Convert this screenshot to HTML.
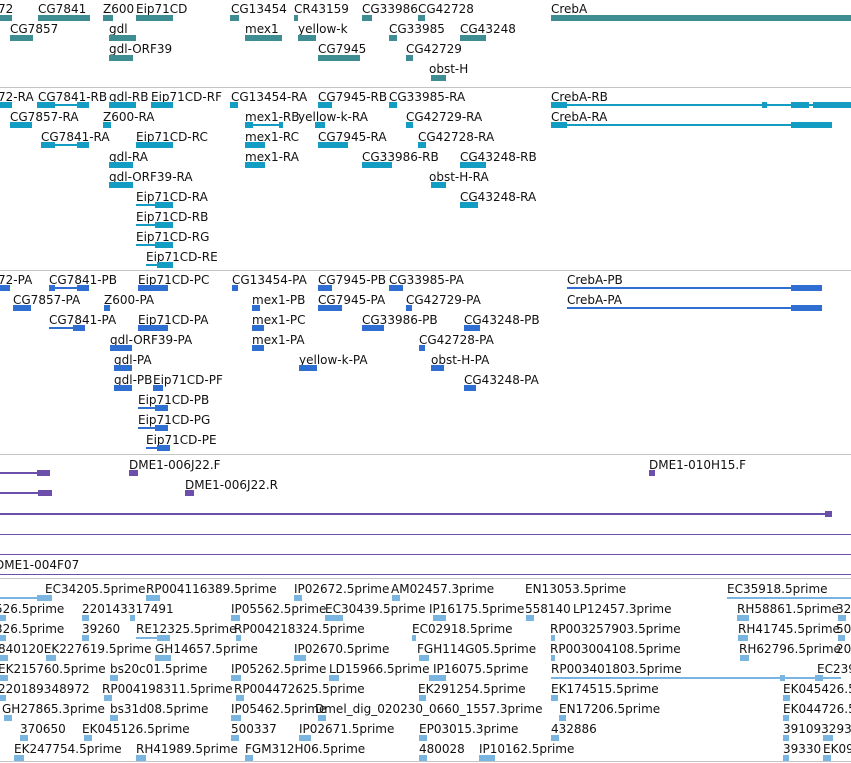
<!DOCTYPE html><html><head><meta charset="utf-8"><style>
body{margin:0;width:851px;height:763px;overflow:hidden;background:#fff;position:relative;font-family:"DejaVu Sans","Liberation Sans",sans-serif}
.t{position:absolute;font-size:12px;line-height:14px;white-space:nowrap;color:#111;margin-top:1px}
i{position:absolute;height:6px;display:block}
.a{background:#3e8d92}.b{background:#139dc2}.c{background:#2f6fd2}.d{background:#6c4faa}.e{background:#79b5e0}
.l{height:2px!important}
.s{position:absolute;left:0;width:851px;height:1px;background:#c4c4c4}
.p{position:absolute;left:0;width:851px;height:1px;background:#6c4faa}
</style></head><body>
<div class="s" style="top:87px"></div><div class="s" style="top:270px"></div><div class="s" style="top:454px"></div><div class="s" style="top:578px"></div><div class="s" style="top:761px"></div>

<div class="t" style="left:-2px;top:1px">72</div><i class="a" style="left:0;top:15px;width:12px"></i>
<div class="t" style="left:38px;top:1px">CG7841</div><i class="a" style="left:38px;top:15px;width:52px"></i>
<div class="t" style="left:103px;top:1px">Z600</div><i class="a" style="left:103px;top:15px;width:10px"></i>
<div class="t" style="left:136px;top:1px">Eip71CD</div><i class="a" style="left:136px;top:15px;width:37px"></i>
<div class="t" style="left:231px;top:1px">CG13454</div><i class="a" style="left:230px;top:15px;width:9px"></i>
<div class="t" style="left:294px;top:1px">CR43159</div><i class="a" style="left:294px;top:15px;width:4px"></i>
<div class="t" style="left:362px;top:1px">CG33986</div><i class="a" style="left:362px;top:15px;width:10px"></i>
<div class="t" style="left:418px;top:1px">CG42728</div><i class="a" style="left:418px;top:15px;width:7px"></i>
<div class="t" style="left:551px;top:1px">CrebA</div><i class="a" style="left:551px;top:15px;width:300px"></i>
<div class="t" style="left:10px;top:21px">CG7857</div><i class="a" style="left:10px;top:35px;width:23px"></i>
<div class="t" style="left:109px;top:21px">gdl</div><i class="a" style="left:109px;top:35px;width:27px"></i>
<div class="t" style="left:245px;top:21px">mex1</div><i class="a" style="left:245px;top:35px;width:37px"></i>
<div class="t" style="left:298px;top:21px">yellow-k</div><i class="a" style="left:298px;top:35px;width:18px"></i>
<div class="t" style="left:389px;top:21px">CG33985</div><i class="a" style="left:389px;top:35px;width:8px"></i>
<div class="t" style="left:460px;top:21px">CG43248</div><i class="a" style="left:460px;top:35px;width:26px"></i>
<div class="t" style="left:109px;top:41px">gdl-ORF39</div><i class="a" style="left:109px;top:55px;width:24px"></i>
<div class="t" style="left:318px;top:41px">CG7945</div><i class="a" style="left:318px;top:55px;width:42px"></i>
<div class="t" style="left:406px;top:41px">CG42729</div><i class="a" style="left:406px;top:55px;width:7px"></i>
<div class="t" style="left:429px;top:61px">obst-H</div><i class="a" style="left:431px;top:75px;width:15px"></i>

<div class="t" style="left:-2px;top:89px">72-RA</div><i class="b" style="left:0;top:102px;width:12px"></i>
<div class="t" style="left:38px;top:89px">CG7841-RB</div><i class="b" style="left:37px;top:102px;width:18px"></i><i class="b l" style="left:55px;top:104px;width:25px"></i><i class="b" style="left:77px;top:102px;width:12px"></i>
<div class="t" style="left:109px;top:89px">gdl-RB</div><i class="b" style="left:109px;top:102px;width:27px"></i>
<div class="t" style="left:151px;top:89px">Eip71CD-RF</div><i class="b" style="left:151px;top:102px;width:22px"></i>
<div class="t" style="left:231px;top:89px">CG13454-RA</div><i class="b" style="left:230px;top:102px;width:8px"></i>
<div class="t" style="left:318px;top:89px">CG7945-RB</div><i class="b" style="left:318px;top:102px;width:14px"></i>
<div class="t" style="left:389px;top:89px">CG33985-RA</div><i class="b" style="left:389px;top:102px;width:8px"></i>
<div class="t" style="left:551px;top:89px">CrebA-RB</div><i class="b" style="left:551px;top:102px;width:16px"></i><i class="b l" style="left:551px;top:104px;width:300px"></i><i class="b" style="left:762px;top:102px;width:5px"></i><i class="b" style="left:791px;top:102px;width:18px"></i><i class="b" style="left:813px;top:102px;width:38px"></i>
<div class="t" style="left:10px;top:109px">CG7857-RA</div><i class="b" style="left:10px;top:122px;width:22px"></i>
<div class="t" style="left:103px;top:109px">Z600-RA</div><i class="b" style="left:103px;top:122px;width:8px"></i>
<div class="t" style="left:245px;top:109px">mex1-RB</div><i class="b" style="left:245px;top:122px;width:8px"></i><i class="b l" style="left:245px;top:124px;width:38px"></i><i class="b" style="left:279px;top:122px;width:4px"></i>
<div class="t" style="left:298px;top:109px">yellow-k-RA</div><i class="b" style="left:315px;top:122px;width:10px"></i>
<div class="t" style="left:406px;top:109px">CG42729-RA</div><i class="b" style="left:406px;top:122px;width:7px"></i>
<div class="t" style="left:551px;top:109px">CrebA-RA</div><i class="b" style="left:551px;top:122px;width:16px"></i><i class="b l" style="left:551px;top:124px;width:281px"></i><i class="b" style="left:791px;top:122px;width:41px"></i>
<div class="t" style="left:41px;top:129px">CG7841-RA</div><i class="b" style="left:41px;top:142px;width:14px"></i><i class="b l" style="left:41px;top:144px;width:48px"></i><i class="b" style="left:77px;top:142px;width:12px"></i>
<div class="t" style="left:136px;top:129px">Eip71CD-RC</div><i class="b" style="left:136px;top:142px;width:37px"></i>
<div class="t" style="left:245px;top:129px">mex1-RC</div><i class="b" style="left:245px;top:142px;width:20px"></i>
<div class="t" style="left:318px;top:129px">CG7945-RA</div><i class="b" style="left:318px;top:142px;width:30px"></i>
<div class="t" style="left:418px;top:129px">CG42728-RA</div><i class="b" style="left:418px;top:142px;width:8px"></i>
<div class="t" style="left:109px;top:149px">gdl-RA</div><i class="b" style="left:109px;top:162px;width:24px"></i>
<div class="t" style="left:245px;top:149px">mex1-RA</div><i class="b" style="left:245px;top:162px;width:20px"></i>
<div class="t" style="left:362px;top:149px">CG33986-RB</div><i class="b" style="left:362px;top:162px;width:30px"></i>
<div class="t" style="left:460px;top:149px">CG43248-RB</div><i class="b" style="left:460px;top:162px;width:26px"></i>
<div class="t" style="left:109px;top:169px">gdl-ORF39-RA</div><i class="b" style="left:109px;top:182px;width:24px"></i>
<div class="t" style="left:429px;top:169px">obst-H-RA</div><i class="b" style="left:431px;top:182px;width:15px"></i>
<div class="t" style="left:136px;top:189px">Eip71CD-RA</div><i class="b l" style="left:136px;top:204px;width:37px"></i><i class="b" style="left:155px;top:202px;width:18px"></i>
<div class="t" style="left:460px;top:189px">CG43248-RA</div><i class="b" style="left:460px;top:202px;width:18px"></i>
<div class="t" style="left:136px;top:209px">Eip71CD-RB</div><i class="b l" style="left:136px;top:224px;width:37px"></i><i class="b" style="left:155px;top:222px;width:18px"></i>
<div class="t" style="left:136px;top:229px">Eip71CD-RG</div><i class="b l" style="left:136px;top:244px;width:37px"></i><i class="b" style="left:155px;top:242px;width:18px"></i>
<div class="t" style="left:146px;top:249px">Eip71CD-RE</div><i class="b l" style="left:146px;top:264px;width:27px"></i><i class="b" style="left:157px;top:262px;width:16px"></i>

<div class="t" style="left:-2px;top:272px">72-PA</div><i class="c" style="left:0;top:285px;width:10px"></i>
<div class="t" style="left:49px;top:272px">CG7841-PB</div><i class="c l" style="left:49px;top:287px;width:40px"></i><i class="c" style="left:49px;top:285px;width:6px"></i><i class="c" style="left:77px;top:285px;width:12px"></i>
<div class="t" style="left:138px;top:272px">Eip71CD-PC</div><i class="c" style="left:138px;top:285px;width:30px"></i>
<div class="t" style="left:232px;top:272px">CG13454-PA</div><i class="c" style="left:232px;top:285px;width:6px"></i>
<div class="t" style="left:318px;top:272px">CG7945-PB</div><i class="c" style="left:318px;top:285px;width:14px"></i>
<div class="t" style="left:389px;top:272px">CG33985-PA</div><i class="c" style="left:389px;top:285px;width:14px"></i>
<div class="t" style="left:567px;top:272px">CrebA-PB</div><i class="c l" style="left:567px;top:287px;width:255px"></i><i class="c" style="left:791px;top:285px;width:31px"></i>
<div class="t" style="left:13px;top:292px">CG7857-PA</div><i class="c" style="left:13px;top:305px;width:18px"></i>
<div class="t" style="left:104px;top:292px">Z600-PA</div><i class="c" style="left:104px;top:305px;width:6px"></i>
<div class="t" style="left:252px;top:292px">mex1-PB</div><i class="c" style="left:252px;top:305px;width:8px"></i>
<div class="t" style="left:318px;top:292px">CG7945-PA</div><i class="c" style="left:318px;top:305px;width:24px"></i>
<div class="t" style="left:406px;top:292px">CG42729-PA</div><i class="c" style="left:406px;top:305px;width:6px"></i>
<div class="t" style="left:567px;top:292px">CrebA-PA</div><i class="c l" style="left:567px;top:307px;width:255px"></i><i class="c" style="left:791px;top:305px;width:31px"></i>
<div class="t" style="left:49px;top:312px">CG7841-PA</div><i class="c l" style="left:49px;top:327px;width:36px"></i><i class="c" style="left:73px;top:325px;width:12px"></i>
<div class="t" style="left:138px;top:312px">Eip71CD-PA</div><i class="c" style="left:138px;top:325px;width:30px"></i>
<div class="t" style="left:252px;top:312px">mex1-PC</div><i class="c" style="left:252px;top:325px;width:12px"></i>
<div class="t" style="left:362px;top:312px">CG33986-PB</div><i class="c" style="left:362px;top:325px;width:22px"></i>
<div class="t" style="left:464px;top:312px">CG43248-PB</div><i class="c" style="left:464px;top:325px;width:16px"></i>
<div class="t" style="left:110px;top:332px">gdl-ORF39-PA</div><i class="c" style="left:110px;top:345px;width:22px"></i>
<div class="t" style="left:252px;top:332px">mex1-PA</div><i class="c" style="left:252px;top:345px;width:12px"></i>
<div class="t" style="left:419px;top:332px">CG42728-PA</div><i class="c" style="left:419px;top:345px;width:6px"></i>
<div class="t" style="left:114px;top:352px">gdl-PA</div><i class="c" style="left:114px;top:365px;width:18px"></i>
<div class="t" style="left:299px;top:352px">yellow-k-PA</div><i class="c" style="left:299px;top:365px;width:18px"></i>
<div class="t" style="left:431px;top:352px">obst-H-PA</div><i class="c" style="left:431px;top:365px;width:13px"></i>
<div class="t" style="left:114px;top:372px">gdl-PB</div><div class="t" style="left:153px;top:372px">Eip71CD-PF</div><i class="c" style="left:114px;top:385px;width:18px"></i><i class="c" style="left:153px;top:385px;width:10px"></i>
<div class="t" style="left:464px;top:372px">CG43248-PA</div><i class="c" style="left:464px;top:385px;width:12px"></i>
<div class="t" style="left:138px;top:392px">Eip71CD-PB</div><i class="c l" style="left:138px;top:407px;width:30px"></i><i class="c" style="left:155px;top:405px;width:13px"></i>
<div class="t" style="left:138px;top:412px">Eip71CD-PG</div><i class="c l" style="left:138px;top:427px;width:30px"></i><i class="c" style="left:155px;top:425px;width:13px"></i>
<div class="t" style="left:146px;top:432px">Eip71CD-PE</div><i class="c l" style="left:146px;top:447px;width:24px"></i><i class="c" style="left:157px;top:445px;width:13px"></i>

<i class="d l" style="left:0;top:472px;width:50px"></i><i class="d" style="left:37px;top:470px;width:13px"></i>
<div class="t" style="left:129px;top:457px">DME1-006J22.F</div><i class="d" style="left:129px;top:470px;width:9px"></i>
<div class="t" style="left:649px;top:457px">DME1-010H15.F</div><i class="d" style="left:649px;top:470px;width:6px"></i>
<i class="d l" style="left:0;top:492px;width:52px"></i><i class="d" style="left:38px;top:490px;width:14px"></i>
<div class="t" style="left:185px;top:477px">DME1-006J22.R</div><i class="d" style="left:185px;top:490px;width:9px"></i>
<i class="d l" style="left:0;top:513px;width:826px"></i><i class="d" style="left:825px;top:511px;width:7px"></i>
<div class="p" style="top:534px"></div><div class="p" style="top:554px"></div><div class="p" style="top:574px"></div>
<div class="t" style="left:-5px;top:557px">DME1-004F07</div>

<i class="e l" style="left:0;top:597px;width:52px"></i><i class="e" style="left:37px;top:595px;width:15px"></i>
<div class="t" style="left:45px;top:581px">EC34205.5prime</div>
<div class="t" style="left:146px;top:581px">RP004116389.5prime</div><i class="e" style="left:146px;top:595px;width:14px"></i>
<div class="t" style="left:294px;top:581px">IP02672.5prime</div><i class="e" style="left:294px;top:595px;width:8px"></i>
<div class="t" style="left:391px;top:581px">AM02457.3prime</div><i class="e" style="left:392px;top:595px;width:8px"></i>
<div class="t" style="left:525px;top:581px">EN13053.5prime</div>
<div class="t" style="left:727px;top:581px">EC35918.5prime</div><i class="e l" style="left:727px;top:597px;width:124px"></i>
<div class="t" style="left:-5px;top:601px">526.5prime</div><i class="e" style="left:0;top:615px;width:6px"></i>
<div class="t" style="left:82px;top:601px">220143317491</div><i class="e" style="left:82px;top:615px;width:7px"></i><i class="e" style="left:130px;top:615px;width:5px"></i>
<div class="t" style="left:231px;top:601px">IP05562.5prime</div><i class="e" style="left:231px;top:615px;width:9px"></i>
<div class="t" style="left:325px;top:601px">EC30439.5prime</div><i class="e" style="left:325px;top:615px;width:18px"></i>
<div class="t" style="left:429px;top:601px">IP16175.5prime</div><i class="e" style="left:433px;top:615px;width:13px"></i>
<div class="t" style="left:525px;top:601px">558140</div><div class="t" style="left:573px;top:601px">LP12457.3prime</div><i class="e" style="left:526px;top:615px;width:8px"></i>
<div class="t" style="left:737px;top:601px">RH58861.5prime</div><i class="e" style="left:737px;top:615px;width:12px"></i>
<div class="t" style="left:836px;top:601px">32</div><i class="e" style="left:838px;top:615px;width:8px"></i>
<div class="t" style="left:-5px;top:621px">326.5prime</div><i class="e" style="left:0;top:635px;width:6px"></i>
<div class="t" style="left:82px;top:621px">39260</div><i class="e" style="left:82px;top:635px;width:7px"></i>
<div class="t" style="left:136px;top:621px">RE12325.5prime</div><i class="e l" style="left:136px;top:637px;width:34px"></i><i class="e" style="left:157px;top:635px;width:13px"></i>
<div class="t" style="left:234px;top:621px">RP004218324.5prime</div><i class="e" style="left:236px;top:635px;width:5px"></i>
<div class="t" style="left:412px;top:621px">EC02918.5prime</div><i class="e" style="left:412px;top:635px;width:4px"></i>
<div class="t" style="left:550px;top:621px">RP003257903.5prime</div><i class="e" style="left:551px;top:635px;width:4px"></i>
<div class="t" style="left:738px;top:621px">RH41745.5prime</div><i class="e" style="left:738px;top:635px;width:10px"></i>
<div class="t" style="left:836px;top:621px">50</div><i class="e" style="left:838px;top:635px;width:7px"></i>
<div class="t" style="left:-2px;top:641px">840120EK227619.5prime</div><i class="e" style="left:0;top:655px;width:8px"></i><i class="e" style="left:46px;top:655px;width:10px"></i>
<div class="t" style="left:155px;top:641px">GH14657.5prime</div><i class="e" style="left:155px;top:655px;width:16px"></i>
<div class="t" style="left:294px;top:641px">IP02670.5prime</div><i class="e" style="left:294px;top:655px;width:12px"></i>
<div class="t" style="left:417px;top:641px">FGH114G05.5prime</div><i class="e" style="left:419px;top:655px;width:10px"></i>
<div class="t" style="left:550px;top:641px">RP003004108.5prime</div><i class="e" style="left:551px;top:655px;width:4px"></i>
<div class="t" style="left:739px;top:641px">RH62796.5prime</div><i class="e" style="left:740px;top:655px;width:9px"></i>
<div class="t" style="left:836px;top:641px">20</div>
<div class="t" style="left:-2px;top:661px">EK215760.5prime</div><i class="e" style="left:0;top:675px;width:8px"></i>
<div class="t" style="left:110px;top:661px">bs20c01.5prime</div><i class="e" style="left:110px;top:675px;width:8px"></i>
<div class="t" style="left:231px;top:661px">IP05262.5prime</div><i class="e" style="left:231px;top:675px;width:10px"></i>
<div class="t" style="left:329px;top:661px">LD15966.5prime</div><i class="e" style="left:329px;top:675px;width:10px"></i>
<div class="t" style="left:433px;top:661px">IP16075.5prime</div><i class="e" style="left:429px;top:675px;width:17px"></i>
<div class="t" style="left:551px;top:661px">RP003401803.5prime</div><i class="e l" style="left:551px;top:677px;width:290px"></i><i class="e" style="left:780px;top:675px;width:5px"></i><i class="e" style="left:815px;top:675px;width:8px"></i>
<div class="t" style="left:817px;top:661px">EC239</div>
<div class="t" style="left:-2px;top:681px">220189348972</div><i class="e" style="left:0;top:695px;width:6px"></i>
<div class="t" style="left:102px;top:681px">RP004198311.5prime</div><i class="e" style="left:104px;top:695px;width:8px"></i>
<div class="t" style="left:234px;top:681px">RP004472625.5prime</div><i class="e" style="left:236px;top:695px;width:8px"></i>
<div class="t" style="left:418px;top:681px">EK291254.5prime</div><i class="e" style="left:419px;top:695px;width:7px"></i>
<div class="t" style="left:551px;top:681px">EK174515.5prime</div><i class="e" style="left:551px;top:695px;width:7px"></i>
<div class="t" style="left:783px;top:681px">EK045426.5</div><i class="e" style="left:783px;top:695px;width:7px"></i>
<div class="t" style="left:2px;top:701px">GH27865.3prime</div><i class="e" style="left:4px;top:715px;width:8px"></i>
<div class="t" style="left:110px;top:701px">bs31d08.5prime</div><i class="e" style="left:110px;top:715px;width:8px"></i>
<div class="t" style="left:231px;top:701px">IP05462.5prime</div><i class="e" style="left:231px;top:715px;width:10px"></i>
<div class="t" style="left:315px;top:701px">Dmel_dig_020230_0660_1557.3prime</div><i class="e" style="left:318px;top:715px;width:8px"></i>
<div class="t" style="left:559px;top:701px">EN17206.5prime</div><i class="e" style="left:559px;top:715px;width:7px"></i>
<div class="t" style="left:783px;top:701px">EK044726.5</div><i class="e" style="left:783px;top:715px;width:6px"></i>
<div class="t" style="left:20px;top:721px">370650</div><i class="e" style="left:20px;top:735px;width:8px"></i>
<div class="t" style="left:82px;top:721px">EK045126.5prime</div><i class="e" style="left:84px;top:735px;width:8px"></i>
<div class="t" style="left:231px;top:721px">500337</div><i class="e" style="left:231px;top:735px;width:8px"></i>
<div class="t" style="left:299px;top:721px">IP02671.5prime</div><i class="e" style="left:299px;top:735px;width:12px"></i>
<div class="t" style="left:419px;top:721px">EP03015.3prime</div><i class="e" style="left:419px;top:735px;width:8px"></i>
<div class="t" style="left:551px;top:721px">432886</div><i class="e" style="left:551px;top:735px;width:8px"></i>
<div class="t" style="left:783px;top:721px">391093293</div><i class="e" style="left:783px;top:735px;width:6px"></i><i class="e" style="left:823px;top:735px;width:10px"></i>
<div class="t" style="left:14px;top:741px">EK247754.5prime</div><i class="e" style="left:14px;top:755px;width:10px"></i>
<div class="t" style="left:136px;top:741px">RH41989.5prime</div><i class="e" style="left:136px;top:755px;width:10px"></i>
<div class="t" style="left:245px;top:741px">FGM312H06.5prime</div><i class="e" style="left:245px;top:755px;width:8px"></i>
<div class="t" style="left:419px;top:741px">480028</div><i class="e" style="left:419px;top:755px;width:8px"></i>
<div class="t" style="left:479px;top:741px">IP10162.5prime</div><i class="e" style="left:479px;top:755px;width:16px"></i>
<div class="t" style="left:783px;top:741px">39330</div><div class="t" style="left:823px;top:741px">EK09</div><i class="e" style="left:783px;top:755px;width:6px"></i><i class="e" style="left:823px;top:755px;width:8px"></i>
</body></html>
